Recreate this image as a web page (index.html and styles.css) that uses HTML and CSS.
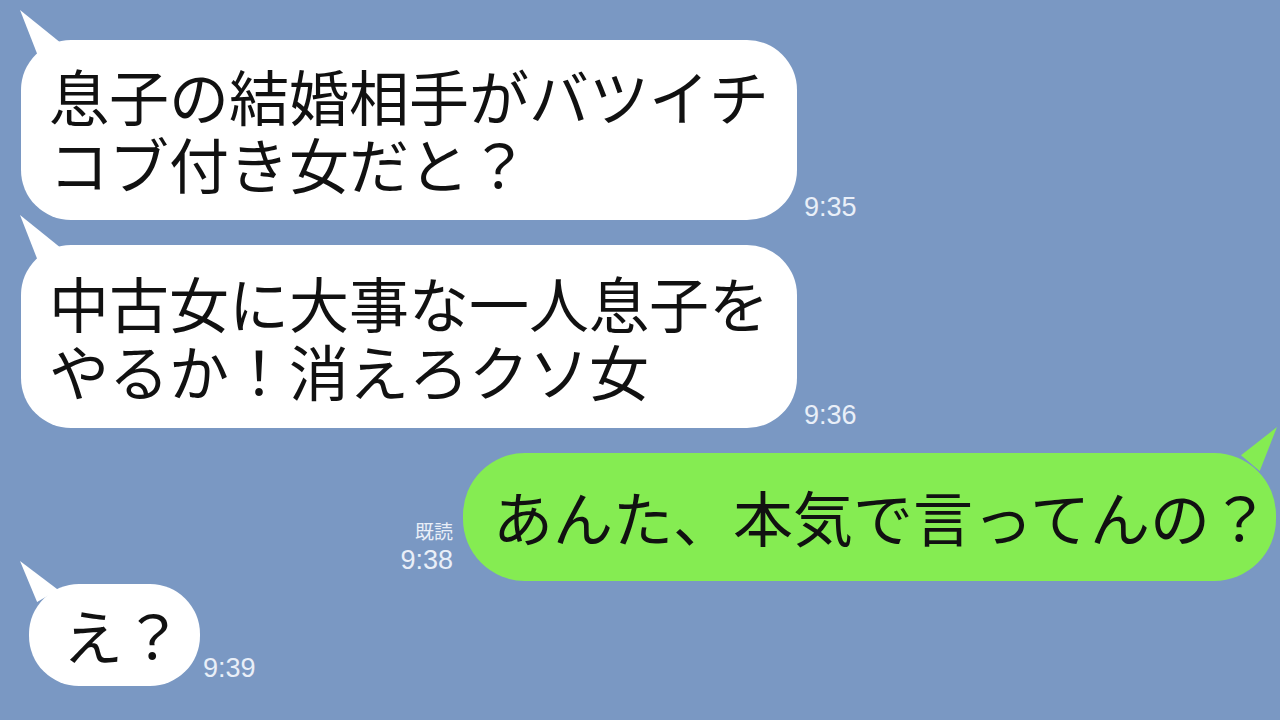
FILE: index.html
```html
<!DOCTYPE html>
<html lang="ja">
<head>
    <meta charset="UTF-8">
    <meta name="viewport" content="width=device-width, initial-scale=1.0">
    <title>トーク</title>
    <link rel="stylesheet" href="styles.css">
</head>
<body>
    <div class="chat">
        <div class="row in">
            <div class="bubble"><span class="line">息子の結婚相手がバツイチ</span><span class="line">コブ付き女だと？</span></div>
            <div class="meta"><span class="time">9:35</span></div>
        </div>

        <div class="row in">
            <div class="bubble b2"><span class="line">中古女に大事な一人息子を</span><span class="line">やるか！消えろクソ女</span></div>
            <div class="meta"><span class="time">9:36</span></div>
        </div>

        <div class="row out">
            <div class="meta"><span class="read">既読</span><span class="time">9:38</span></div>
            <div class="bubble green"><span class="line">あんた、本気で言ってんの？</span></div>
        </div>

        <div class="row in short">
            <div class="bubble small"><span class="line">え？</span></div>
            <div class="meta"><span class="time">9:39</span></div>
        </div>
    </div>
</body>
</html>
```

FILE: styles.css
```css
html, body {
    height: 100%;
}
body {
    margin: 0;
    background-color: #7a98c3;
    font-family: "Liberation Sans", "Noto Sans CJK JP", sans-serif;
    overflow: hidden;
}
.chat {
    display: flex;
    flex-direction: column;
    padding-top: 40px;
}
.row {
    display: flex;
    align-items: flex-end;
}
.row + .row {
    margin-top: 25px;
}
.row.short {
    margin-top: 3px;
}
.row.in {
    padding-left: 21px;
}
.row.out {
    justify-content: flex-end;
    padding-right: 4px;
}

.bubble {
    position: relative;
    background-color: #fff;
    color: #111;
    font-size: 60px;
    line-height: 68px;
    padding: 27px 28px 17px 28px;
    border-radius: 50px;
    white-space: nowrap;
}
.bubble .line {
    display: block;
    height: 68px;
}
.bubble::before {
    content: "";
    position: absolute;
    left: -1px;
    top: -30px;
    width: 40px;
    height: 46px;
    background-color: inherit;
    clip-path: polygon(0 0, 100% 70%, 45% 100%);
}
.bubble.b2 {
    padding-top: 29px;
    padding-bottom: 18px;
}
.bubble.small {
    margin-left: 8px;
    padding: 22px 17px 12px 34px;
}
.bubble.small::before {
    left: -9px;
    top: -23px;
    width: 38px;
    height: 41px;
}
.bubble.green {
    background-color: #85ec52;
    padding: 35px 6px 25px 30px;
    border-radius: 62px;
}
.bubble.green::before {
    left: auto;
    right: -1px;
    top: -26px;
    width: 36px;
    height: 44px;
    clip-path: polygon(100% 0, 0 64%, 52% 100%);
}

.meta {
    display: flex;
    flex-direction: column;
    align-items: flex-end;
    color: #e9eff8;
    margin-left: 7px;
    margin-bottom: -3px;
}
.row.out .meta {
    margin-left: 0;
    margin-right: 10px;
    margin-bottom: 5px;
}
.row.short .meta {
    margin-left: 3px;
    margin-bottom: 2px;
}
.time {
    font-size: 27px;
    line-height: 31px;
}
.read {
    font-size: 19px;
    line-height: 24px;
}
```
